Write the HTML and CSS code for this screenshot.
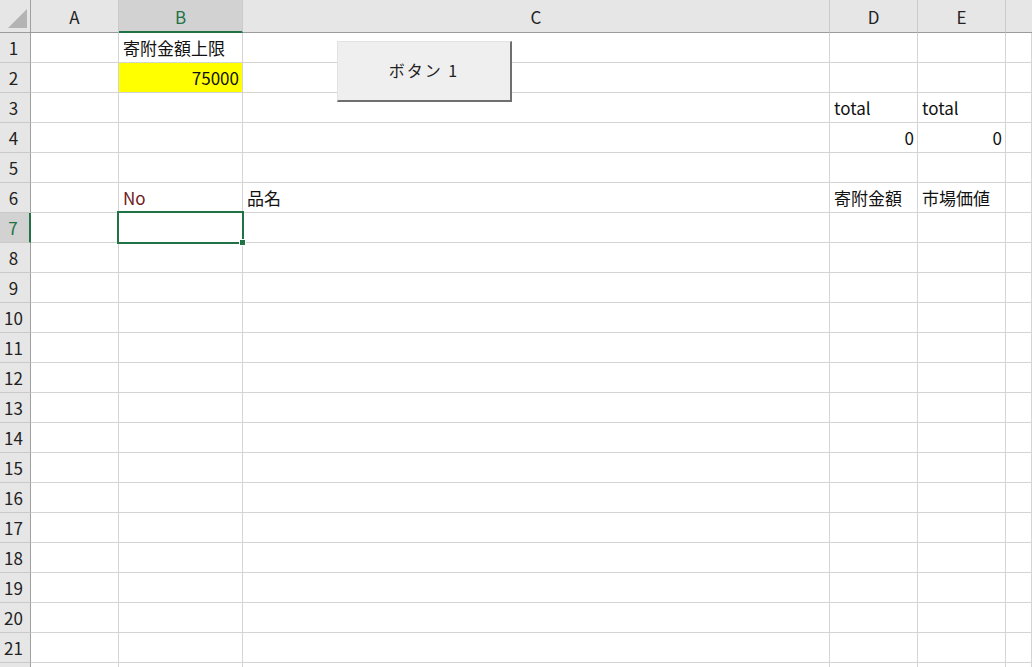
FILE: index.html
```html
<!DOCTYPE html>
<html lang="ja">
<head>
    <meta charset="utf-8">
    <title>Book1 - Excel</title>
    <link rel="stylesheet" href="styles.css">
</head>
<body>
<div class="book">
    <div class="sheet">
        <div class="corner"><svg width="30" height="32" viewBox="0 0 30 32"><polygon points="27,9 27,28 8,28" fill="#b4b4b4"/></svg></div>
        <div class="ch">A</div><div class="ch sel">B</div><div class="ch">C</div><div class="ch">D</div><div class="ch">E</div><div class="ch last"></div>

        <div class="rh">1</div><div class="c"></div><div class="c">寄附金額上限</div><div class="c"></div><div class="c"></div><div class="c"></div><div class="c"></div>
        <div class="rh">2</div><div class="c"></div><div class="c num limit">75000</div><div class="c"></div><div class="c"></div><div class="c"></div><div class="c"></div>
        <div class="rh">3</div><div class="c"></div><div class="c"></div><div class="c"></div><div class="c">total</div><div class="c">total</div><div class="c"></div>
        <div class="rh">4</div><div class="c"></div><div class="c"></div><div class="c"></div><div class="c num">0</div><div class="c num">0</div><div class="c"></div>
        <div class="rh">5</div><div class="c"></div><div class="c"></div><div class="c"></div><div class="c"></div><div class="c"></div><div class="c"></div>
        <div class="rh">6</div><div class="c"></div><div class="c no">No</div><div class="c">品名</div><div class="c">寄附金額</div><div class="c">市場価値</div><div class="c"></div>
        <div class="rh sel">7</div><div class="c"></div><div class="c"></div><div class="c"></div><div class="c"></div><div class="c"></div><div class="c"></div>
        <div class="rh">8</div><div class="c"></div><div class="c"></div><div class="c"></div><div class="c"></div><div class="c"></div><div class="c"></div>
        <div class="rh">9</div><div class="c"></div><div class="c"></div><div class="c"></div><div class="c"></div><div class="c"></div><div class="c"></div>
        <div class="rh">10</div><div class="c"></div><div class="c"></div><div class="c"></div><div class="c"></div><div class="c"></div><div class="c"></div>
        <div class="rh">11</div><div class="c"></div><div class="c"></div><div class="c"></div><div class="c"></div><div class="c"></div><div class="c"></div>
        <div class="rh">12</div><div class="c"></div><div class="c"></div><div class="c"></div><div class="c"></div><div class="c"></div><div class="c"></div>
        <div class="rh">13</div><div class="c"></div><div class="c"></div><div class="c"></div><div class="c"></div><div class="c"></div><div class="c"></div>
        <div class="rh">14</div><div class="c"></div><div class="c"></div><div class="c"></div><div class="c"></div><div class="c"></div><div class="c"></div>
        <div class="rh">15</div><div class="c"></div><div class="c"></div><div class="c"></div><div class="c"></div><div class="c"></div><div class="c"></div>
        <div class="rh">16</div><div class="c"></div><div class="c"></div><div class="c"></div><div class="c"></div><div class="c"></div><div class="c"></div>
        <div class="rh">17</div><div class="c"></div><div class="c"></div><div class="c"></div><div class="c"></div><div class="c"></div><div class="c"></div>
        <div class="rh">18</div><div class="c"></div><div class="c"></div><div class="c"></div><div class="c"></div><div class="c"></div><div class="c"></div>
        <div class="rh">19</div><div class="c"></div><div class="c"></div><div class="c"></div><div class="c"></div><div class="c"></div><div class="c"></div>
        <div class="rh">20</div><div class="c"></div><div class="c"></div><div class="c"></div><div class="c"></div><div class="c"></div><div class="c"></div>
        <div class="rh">21</div><div class="c"></div><div class="c"></div><div class="c"></div><div class="c"></div><div class="c"></div><div class="c"></div>
        <div class="rh"></div><div class="c"></div><div class="c"></div><div class="c"></div><div class="c"></div><div class="c"></div><div class="c"></div>
    </div>

    <div class="button1">ボタン 1</div>
    <div class="selection"><span class="handle"></span></div>
</div>
</body>
</html>
```

FILE: styles.css
```css
html,body{
    margin: 0;
    padding: 0;
    background: #fff;
    overflow: hidden;
    font-family: "Noto Sans CJK JP", "Noto Sans", sans-serif;
    cursor: default;
}

.book{
    position: relative;
    width: 1032px;
    height: 667px;
    overflow: hidden;
}

.sheet{
    display: grid;
    grid-template-columns: 31px 88px 124px 587px 88px 88px 1fr;
    grid-template-rows: 33px;
    grid-auto-rows: 30px;
    font-size: 17px;
    line-height: 1;
    color: #111;
}
.sheet > div{
    box-sizing: border-box;
    display: flex;
    align-items: center;
    white-space: nowrap;
}

.corner{
    background: #e6e6e6;
    border-right: 1px solid #a0a0a0;
    border-bottom: 1px solid #9b9b9b;
}
.corner svg{ display: block; }

.ch{
    justify-content: center;
    background: #e6e6e6;
    border-right: 1px solid #cacaca;
    border-bottom: 1px solid #9b9b9b;
    color: #222;
    padding-top: 1px;
}
.ch.last{ border-right: none; }
.ch.sel{
    background: #d2d2d2;
    color: #217346;
    border-bottom: 2px solid #217346;
}

.rh{
    justify-content: center;
    background: #e6e6e6;
    border-right: 1px solid #a0a0a0;
    border-bottom: 1px solid #cacaca;
    color: #222;
    padding-right: 3px;
}
.rh.sel{
    background: #d2d2d2;
    color: #217346;
    border-right: 2px solid #217346;
}

.c{
    border-right: 1px solid #d4d4d4;
    border-bottom: 1px solid #d4d4d4;
    padding: 0 4px;
}
.c.num{ justify-content: flex-end; padding-right: 3px; }
.c.limit{ background: #ffff00; }
.c.no{ color: #6e1a1a; }

.button1{
    position: absolute;
    left: 337px;
    top: 41px;
    width: 175px;
    height: 61px;
    box-sizing: border-box;
    background: #efefef;
    border-top: 1px solid #e2e2e2;
    border-left: 1px solid #e2e2e2;
    border-right: 2px solid #6f6f6f;
    border-bottom: 2px solid #6f6f6f;
    display: flex;
    align-items: center;
    justify-content: center;
    padding-bottom: 2px;
    font-size: 16px;
    letter-spacing: 2px;
    color: #222;
}

.selection{
    position: absolute;
    left: 117px;
    top: 211px;
    width: 127px;
    height: 33px;
    box-sizing: border-box;
    border: 2px solid #217346;
}
.selection .handle{
    position: absolute;
    right: -4px;
    bottom: -4px;
    width: 5px;
    height: 5px;
    background: #217346;
    border: 1px solid #fff;
}
```
